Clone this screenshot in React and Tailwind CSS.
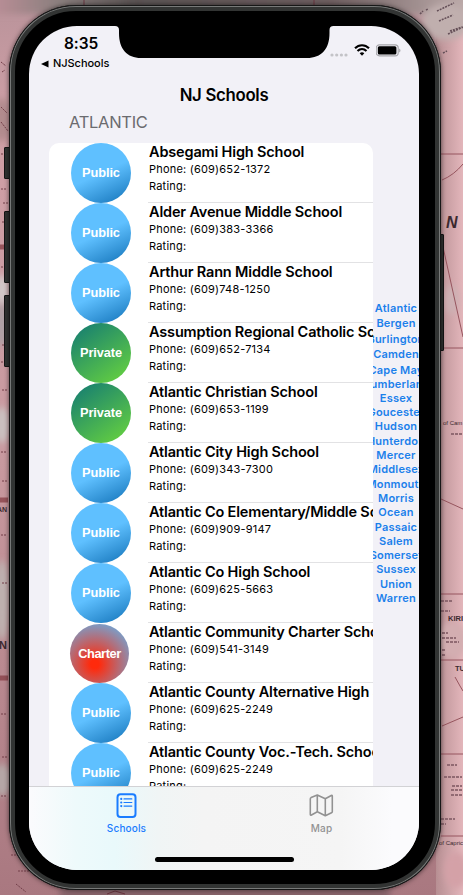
import React from "react";

const schools = [
  ["Public", "Absegami High School", "(609)652-1372"],
  ["Public", "Alder Avenue Middle School", "(609)383-3366"],
  ["Public", "Arthur Rann Middle School", "(609)748-1250"],
  ["Private", "Assumption Regional Catholic School", "(609)652-7134"],
  ["Private", "Atlantic Christian School", "(609)653-1199"],
  ["Public", "Atlantic City High School", "(609)343-7300"],
  ["Public", "Atlantic Co Elementary/Middle School", "(609)909-9147"],
  ["Public", "Atlantic Co High School", "(609)625-5663"],
  ["Charter", "Atlantic Community Charter School", "(609)541-3149"],
  ["Public", "Atlantic County Alternative High School", "(609)625-2249"],
  ["Public", "Atlantic County Voc.-Tech. School", "(609)625-2249"],
];

const circleStyles = {
  Public: "size-[60px] tracking-[-0.1px] bg-[linear-gradient(155deg,#5fc0ff_0%,#5fc0ff_50%,#1878bd_96%)]",
  Private: "size-[60px] tracking-[-0.1px] bg-[linear-gradient(145deg,#188070_8%,#60cb43_88%)]",
  Charter: "-ml-px mt-px size-[59px] tracking-[-0.4px] bg-[radial-gradient(circle_at_42%_68%,#ff2a0c_0%,#ff2a0c_8%,#62b4ec_92%)]",
};

const counties = [
  ["Atlantic", "h-[15px]"],
  ["Bergen", "h-[16px]"],
  ["Burlington", "h-[16px]"],
  ["Camden", "h-[14px]"],
  ["Cape May", "h-[17px]"],
  ["Cumberland", "h-[12px]"],
  ["Essex", "h-[16px]"],
  ["Goucester", "h-[12.6px]"],
  ["Hudson", "h-[15.7px]"],
  ["Hunterdon", "h-[13px]"],
  ["Mercer", "h-[15.4px]"],
  ["Middlesex", "h-[13.4px]"],
  ["Monmouth", "h-[15.3px]"],
  ["Morris", "h-[13.4px]"],
  ["Ocean", "h-[15.2px]"],
  ["Passaic", "h-[13.4px]"],
  ["Salem", "h-[15.2px]"],
  ["Somerset", "h-[13.3px]"],
  ["Sussex", "h-[15.2px]"],
  ["Union", "h-[13.4px]"],
  ["Warren", "h-[15px]"],
];

function MapBackdrop() {
  return (
    <svg className="absolute inset-0" width="463" height="895" viewBox="0 0 463 895" aria-hidden="true">
      <defs>
        <linearGradient id="paper" x1="0" y1="0" x2="0" y2="1">
          <stop offset="0" stopColor="#b9939a" />
          <stop offset="0.13" stopColor="#cf9fa6" />
          <stop offset="0.5" stopColor="#c99aa0" />
          <stop offset="1" stopColor="#a97880" />
        </linearGradient>
        <linearGradient id="right" x1="0" y1="0" x2="1" y2="0">
          <stop offset="0" stopColor="#b78f93" />
          <stop offset="1" stopColor="#e3b6bb" />
        </linearGradient>
        <linearGradient id="top" x1="0" y1="0" x2="1" y2="0">
          <stop offset="0" stopColor="#bd8f98" />
          <stop offset="0.14" stopColor="#8b7f7e" />
          <stop offset="0.3" stopColor="#5a5353" />
          <stop offset="0.7" stopColor="#6e5e60" />
          <stop offset="1" stopColor="#c0aead" />
        </linearGradient>
        <filter id="soft" x="-20%" y="-20%" width="140%" height="140%"><feGaussianBlur stdDeviation="3" /></filter>
      </defs>
      <rect width="463" height="895" fill="url(#paper)" />
      <rect x="436" width="27" height="895" fill="url(#right)" />
      <g filter="url(#soft)">
        <rect x="-10" y="-10" width="483" height="24" fill="url(#top)" />
        <rect x="60" y="888" width="330" height="17" fill="#87636a" />
        <ellipse cx="446" cy="22" rx="24" ry="18" fill="#c0afae" />
        <ellipse cx="2" cy="120" rx="8" ry="22" fill="#b18a8d" />
        <ellipse cx="2" cy="290" rx="7" ry="15" fill="#d1c8c8" />
        <ellipse cx="2" cy="325" rx="7" ry="22" fill="#ada0a4" />
        <ellipse cx="2" cy="425" rx="8" ry="18" fill="#cac0bf" />
        <ellipse cx="2" cy="600" rx="8" ry="40" fill="#bdb0af" />
        <ellipse cx="2" cy="780" rx="10" ry="16" fill="#b5a6a6" />
        <ellipse cx="452" cy="300" rx="7" ry="15" fill="#cdb1b4" />
        <ellipse cx="452" cy="640" rx="15" ry="18" fill="#d3aeb1" />
        <ellipse cx="456" cy="870" rx="12" ry="18" fill="#d4a1a7" />
      </g>
      <path d="M0 247h8M0 500h8M0 678h8" stroke="#82373f" strokeWidth="5" opacity=".7" />
      <path
        d="M1 62l5 4M2 72l3-2M1 107l6 6M1 122l7 9M1 154h7M1 189h6M3 203h5M2 222h4M1 267h6M2 345h5M1 362h5M2 390h5M1 452h6M2 481h5M1 535h6M2 583h5M1 714h6M2 757h5M1 796h6M11 855h14M18 871h15M16 884l10 8"
        fill="none"
        stroke="#723e48"
        strokeDasharray="2 1"
      />
      <path d="M84 0v5M314 0v5M107 894l8-3 10 3" fill="none" stroke="#6d3641" />
      <path
        d="M441 154h22M442 180q12-5 21-16M443 247l20 90M441 348h22M441 499l22 10M441 594h22M441 660h22M455 677l5 9 3 5M442 726l21-9M441 754h22M441 836h22"
        fill="none"
        stroke="#96555e"
        strokeWidth="1"
      />
      <path d="M420 14l3-3M426 10l2-1M437 11l17-8M439 21l14-6M448 34l15-7M450 31l12-4M443 53l4-2" fill="none" stroke="#665159" strokeWidth="1.6" strokeDasharray="2 1" />
      <path d="M441 601h11M441 611h9M442 633h6M442 638h14M446 642h13M442 650h3M442 655h3M447 765h10M444 777h18M452 786h10M451 790h12M451 795h12M441 819h14M441 824h5M451 434h11" stroke="#866069" strokeWidth="2" strokeDasharray="3 1" opacity=".85" />
      <g className="font-['Liberation_Sans']" fill="#3b292f">
        <text x="446" y="228" fontSize="16" fontWeight="bold" fontStyle="italic">N</text>
        <text x="443" y="425" fontSize="6">of Cam</text>
        <text x="448" y="621" fontSize="7.5" fontWeight="bold">KIRI</text>
        <text x="455" y="671" fontSize="7.5" fontWeight="bold">TU</text>
        <text x="439" y="845" fontSize="6">of Capric</text>
        <text x="-3" y="512" fontSize="7" fontWeight="bold">AN</text>
        <text x="-1" y="649" fontSize="11" fontWeight="bold">N</text>
      </g>
    </svg>
  );
}

function StatusBar() {
  return (
    <header className="flex h-[50px] shrink-0 justify-between">
      <div className="w-[92px] pt-[9px]">
        <div className="pl-[35px] text-[15.5px] leading-[18px] font-semibold tracking-[-0.05px]">8:35</div>
        <div className="mt-[4px] flex items-center gap-[4px] pl-[12px] text-[11px] leading-[13px] font-medium tracking-[-0.05px]">
          <svg width="8" height="8" viewBox="0 0 8 8"><path d="M0 4L7.5.5v7z" /></svg>
          <span>NJSchools</span>
        </div>
      </div>
      <div className="flex h-[34px] items-start gap-[6px] pt-[18px] pr-[18px]">
        <svg className="mt-[9px]" width="18" height="4" viewBox="0 0 18 4" fill="#c3c3c7">
          <circle cx="2" cy="2" r="1.6" /><circle cx="6.7" cy="2" r="1.6" /><circle cx="11.4" cy="2" r="1.6" /><circle cx="16" cy="2" r="1.6" />
        </svg>
        <svg width="16" height="12" viewBox="0 0 16 12" fill="none" stroke="#000" strokeWidth="2.1">
          <path d="M1 4.3C5 .2 11 .2 15 4.3M3.5 7c2.7-2.6 6.3-2.6 9 0" />
          <path d="M5.7 9.2c1.3-1.2 3.3-1.2 4.6 0L8 11.7z" fill="#000" stroke="none" />
        </svg>
        <svg width="25" height="13" viewBox="0 0 25 13">
          <rect x=".2" y=".9" width="22" height="11" rx="3.2" fill="none" stroke="#a5a5a9" strokeWidth="1.1" />
          <rect x="1.8" y="2.3" width="18.6" height="8.3" rx="1.5" />
          <path d="M23.2 4.4v4c1.7-.7 1.7-3.3 0-4" fill="#a5a5a9" />
        </svg>
      </div>
    </header>
  );
}

function SchoolRow({ type, name, phone }) {
  return (
    <li className="flex h-[60px] shrink-0 pl-[22px]">
      <div className="w-[77px] shrink-0">
        <div className={`flex items-center justify-center rounded-full font-['Liberation_Sans',sans-serif] text-[12.8px] font-bold text-white ${circleStyles[type]}`}>
          {type}
        </div>
      </div>
      <div className="h-[60px] min-w-0 flex-1 whitespace-nowrap border-b border-[#e2e2e4] pl-px">
        <h3 className="text-[14.5px] leading-[17px] font-semibold tracking-[-0.16px]">{name}</h3>
        <p className="mt-px text-[11px] leading-[17px] tracking-[0.2px]">Phone: {phone}</p>
        <p className="text-[11px] leading-[16px] tracking-[0.2px]">Rating:</p>
      </div>
    </li>
  );
}

function TabBar() {
  return (
    <nav className="flex h-[84px] shrink-0 flex-col border-t border-[#d2d2d5] bg-[linear-gradient(90deg,#fbfbfd_0%,#eefafb_12%,#e9f9fb_22%,#f0f5f5_33%,#f4f4f4_45%,#f5f5f5_80%,#fbfbfd_93%)] text-[10px] font-medium">
      <div className="grid h-[70px] grid-cols-2 pt-[5px]">
        <div className="flex flex-col items-center text-[#1a7cff]">
          <svg width="22" height="27" viewBox="0 0 22 27" fill="none" stroke="currentColor">
            <rect x="1.5" y="2.2" width="18" height="22.8" rx="3" strokeWidth="2" />
            <path d="M8 6.9h7.8M8 10.5h7.8M8 14.1h7.8" strokeWidth="1.2" strokeLinecap="round" />
            <path d="M5.2 6.9h.1M5.2 10.5h.1M5.2 14.1h.1" strokeWidth="2.1" strokeLinecap="round" />
          </svg>
          <span className="mt-[2px] leading-[14px] tracking-[0.15px]">Schools</span>
        </div>
        <div className="flex flex-col items-center text-[#929292]">
          <svg width="26" height="27" viewBox="0.7 -0.6 26 27" fill="none" stroke="currentColor" strokeWidth="1.6" strokeLinejoin="round">
            <path d="M2 6.3q0-.9.8-1.3L9 2.4l8 3.8 6-3.3q1-.4 1 .7v15.2q0 1-.8 1.4L17 23.2l-8-4-5.8 3.2q-1.2.5-1.2-.7zM9 2.4v16.8M17 6.2v17" />
          </svg>
          <span className="mt-[2px] leading-[14px] tracking-[0.15px]">Map</span>
        </div>
      </div>
      <div className="mx-auto h-[5px] w-[139px] rounded-full bg-black" />
    </nav>
  );
}

export default function App() {
  return (
    <main className="relative h-[895px] w-[463px] overflow-hidden bg-[#b9939a] pt-[5px] pl-[9px] font-['Inter',sans-serif] text-black">
      <MapBackdrop />
      <div className="absolute top-[147px] left-[4px] h-[32px] w-[6px] rounded-l-[1px] border border-[#151515] bg-[#303231]" />
      <div className="absolute top-[211px] left-[4px] h-[72px] w-[6px] rounded-l-[1px] border border-[#151515] bg-[#303231]" />
      <div className="absolute top-[295px] left-[4px] h-[72px] w-[6px] rounded-l-[1px] border border-[#151515] bg-[#303231]" />
      <div className="absolute top-[234px] left-[439px] h-[117px] w-[5px] rounded-r-[1px] border border-[#151515] bg-[#303231]" />

      <div className="relative h-[885px] w-[432px] rounded-[67px] bg-[#0b0b0b] shadow-[0_0_5px_#0009]">
        <div className="h-full rounded-[67px] border border-[#171717] bg-[#777978] p-px">
          <div className="h-full rounded-[65px] border-4 border-[#323433] bg-black px-[14px] pt-[15px] pb-[14px]">
            <div className="relative flex h-[844px] w-[390px] flex-col overflow-hidden rounded-[48px] bg-[#f2f1f7]">
              <svg className="absolute top-0 left-[84px]" width="222" height="33" viewBox="0 0 222 33">
                <path d="M2 0h218.5q-4 0-4 4v3c0 16-8 25-22.500 25H28C14 32 6 23 6 7V4Q6 0 2 0z" />
              </svg>
              <StatusBar />
              <h1 className="h-[38px] shrink-0 pt-[8px] text-center text-[16.8px] leading-[22px] font-semibold tracking-[-0.3px]">NJ Schools</h1>
              <h2 className="h-[29px] shrink-0 pl-[40px] text-[16.5px] leading-[17px] font-normal tracking-[-0.3px] text-[#6b6b6f]">ATLANTIC</h2>
              <div className="flex min-h-0 flex-1">
                <ul className="ml-[20px] flex w-[324px] shrink-0 flex-col overflow-hidden rounded-t-[10px] bg-white">
                  {schools.map(([type, name, phone]) => (
                    <SchoolRow key={name} type={type} name={name} phone={phone} />
                  ))}
                </ul>
                <aside className="flex w-[46px] flex-col overflow-hidden pt-[157px] text-[11px] font-semibold tracking-[0.2px] text-[#1b80eb]">
                  {counties.map(([name, height]) => (
                    <div key={name} className={`flex shrink-0 items-center justify-center whitespace-nowrap leading-[14px] ${height}`}>
                      {name}
                    </div>
                  ))}
                </aside>
              </div>
              <TabBar />
            </div>
          </div>
        </div>
      </div>
    </main>
  );
}
